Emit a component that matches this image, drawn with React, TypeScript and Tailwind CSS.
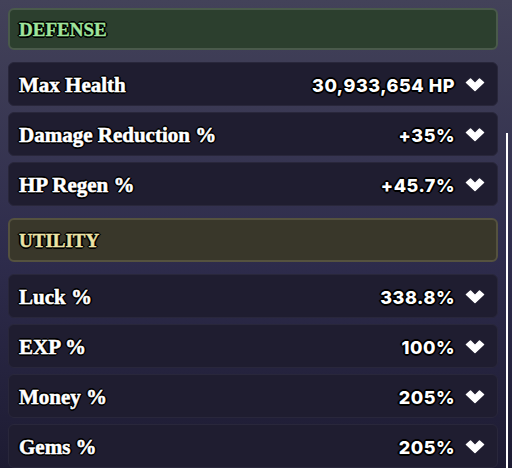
import React from "react";

const outline =
  "[text-shadow:0_0_2px_#000,1px_1px_0_#000,-1px_-1px_0_#000,1px_-1px_0_#000,-1px_1px_0_#000,2px_0_0_#000,-2px_0_0_#000,0_2px_0_#000,0_-2px_0_#000]";

type Stat = { label: string; value: string };

const defense: Stat[] = [
  { label: "Max Health", value: "30,933,654 HP" },
  { label: "Damage Reduction %", value: "+35%" },
  { label: "HP Regen %", value: "+45.7%" },
];

const utility: Stat[] = [
  { label: "Luck %", value: "338.8%" },
  { label: "EXP %", value: "100%" },
  { label: "Money %", value: "205%" },
  { label: "Gems %", value: "205%" },
];

const Chevron = () => (
  <svg width="20" height="14" viewBox="0 0 20 14" className="shrink-0">
    <path
      d="M1.5 4.5 L5.5 1 L10 5.5 L14.5 1 L18.5 4.5 L10 12.5 Z"
      fill="#fff"
      stroke="#fff"
      strokeWidth="1.5"
      strokeLinejoin="round"
    />
  </svg>
);

const Header = ({ title, tone }: { title: string; tone: "green" | "gold" }) => (
  <div
    className={
      tone === "green"
        ? "h-[44px] rounded-md border-2 border-[#4a5a4b] bg-[#2c3f2e] flex items-center px-[9px]"
        : "h-[44px] rounded-md border-2 border-[#55523f] bg-[#39372a] flex items-center px-[9px]"
    }
  >
    <span
      className={`pt-[3px] font-['Liberation_Serif',serif] font-bold text-[19px] [-webkit-text-stroke:0.4px_currentColor] ${outline} ${
        tone === "green" ? "text-[#9fe49c]" : "text-[#ebe3a6]"
      }`}
    >
      {title}
    </span>
  </div>
);

const Row = ({ stat }: { stat: Stat }) => (
  <div className="h-[44px] rounded-md bg-[#1f1d30] border border-[#29273b] flex items-center justify-between pl-[10px] pr-[12px]">
    <span
      className={`pt-[4px] font-['Liberation_Serif',serif] font-bold text-[21px] text-white [-webkit-text-stroke:0.5px_#fff] ${outline}`}
    >
      {stat.label}
    </span>
    <div className="flex items-center gap-[10px] pt-[2px]">
      <span className={`font-['Inter',sans-serif] font-extrabold text-[18px] tracking-[0.03em] text-white ${outline}`}>
        {stat.value}
      </span>
      <Chevron />
    </div>
  </div>
);

const App = () => {
  return (
    <div className="w-[512px] h-[468px] overflow-hidden bg-[linear-gradient(180deg,#434259_0%,#2e2c4c_55%,#1d1b32_100%)] flex">
      <div className="w-[490px] ml-[8px] pt-[8px] flex flex-col">
        <Header title="DEFENSE" tone="green" />
        <div className="mt-[12px] flex flex-col gap-[6px]">
          {defense.map((s) => (
            <Row key={s.label} stat={s} />
          ))}
        </div>
        <div className="mt-[12px]">
          <Header title="UTILITY" tone="gold" />
        </div>
        <div className="mt-[12px] flex flex-col gap-[6px]">
          {utility.map((s) => (
            <Row key={s.label} stat={s} />
          ))}
        </div>
      </div>
      <div className="w-[14px] relative">
        <div className="absolute left-[8px] top-[133px] bottom-0 w-[2px] bg-white" />
      </div>
    </div>
  );
};

export default App;
